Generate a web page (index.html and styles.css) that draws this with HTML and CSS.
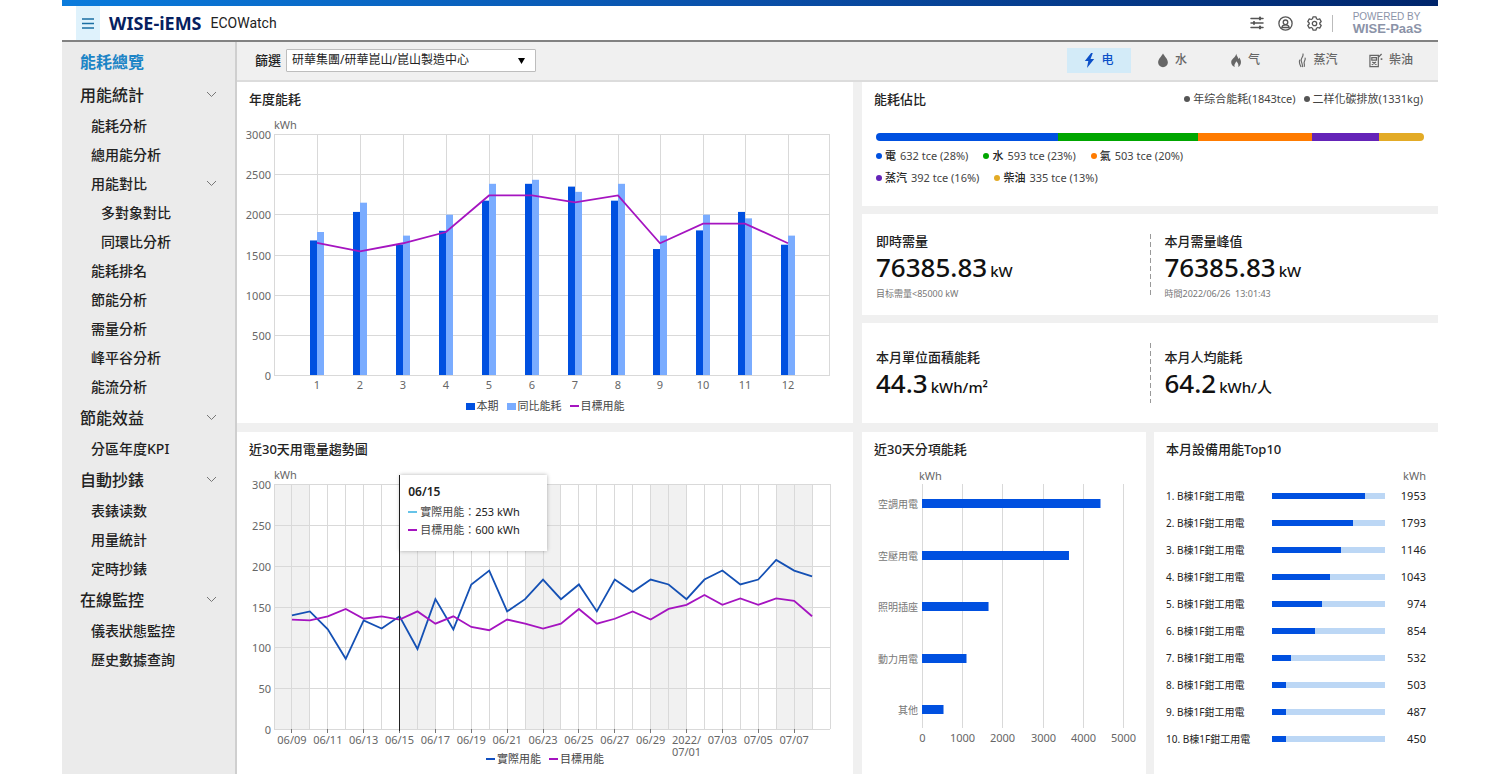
FILE: index.html
```html
<!DOCTYPE html>
<html lang="zh-Hant">
<head>
<meta charset="utf-8">
<meta name="viewport" content="width=device-width, initial-scale=1">
<title>WISE-iEMS ECOWatch</title>
<link rel="stylesheet" href="styles.css">
</head>
<body>
<div class="shell">
  <header class="header">
    <button class="menu-button" type="button" aria-label="選單">
      <svg width="12" height="11" viewBox="0 0 12 11" fill="none" stroke="currentColor" stroke-width="1.5"><path d="M0 1h12M0 5.5h12M0 10h12"/></svg>
    </button>
    <span class="brand">WISE-iEMS</span>
    <span class="product">ECOWatch</span>
    <div class="header-tools">
      <button class="icon-button" type="button" aria-label="偏好">
        <svg width="14" height="14" viewBox="0 0 14 14" fill="none" stroke="currentColor" stroke-width="1.5" stroke-linecap="round"><path d="M1 2.500h12M1 7h12M1 11.500h12"/><path d="M10 1.700v1.600M4 6.200v1.600M10 10.700v1.600" stroke-width="2.200"/></svg>
      </button>
      <button class="icon-button" type="button" aria-label="使用者">
        <svg width="15" height="15" viewBox="0 0 15 15" fill="none" stroke="currentColor" stroke-width="1.3"><circle cx="7.500" cy="7.500" r="6.600"/><circle cx="7.500" cy="6.300" r="2.300"/><path d="M3.800 11.500c.3-1.700 1.600-2.700 3.700-2.700s3.400 1 3.700 2.700z"/></svg>
      </button>
      <button class="icon-button" type="button" aria-label="設定">
        <svg width="15" height="15" viewBox="0 0 15 15" fill="none" stroke="currentColor" stroke-width="1.3" stroke-linejoin="round"><path d="M6 .9h3l.5 1.900 1.300.7 1.900-.6 1.500 2.600L12.800 7v1l1.400 1.500-1.500 2.600-1.900-.6-1.300.7L9 14.100H6l-.5-1.900-1.300-.7-1.900.6L.8 9.500 2.200 8V7L.8 5.500l1.500-2.600 1.900.6 1.300-.7z"/><circle cx="7.500" cy="7.500" r="2.200"/></svg>
      </button>
      <span class="tool-divider"></span>
      <div class="powered"><span>POWERED BY</span><strong>WISE-PaaS</strong></div>
    </div>
  </header>

  <div class="body">
    <nav class="sidebar" aria-label="主選單">
      <a class="nav-top nav-active" href="#">能耗總覽</a>
      <button class="nav-top" type="button">用能統計<svg class="chevron" viewBox="0 0 11 7"><path d="M1 1l4.500 4.500L10 1"/></svg></button>
      <a class="nav-item" href="#">能耗分析</a>
      <a class="nav-item" href="#">總用能分析</a>
      <button class="nav-item" type="button">用能對比<svg class="chevron" viewBox="0 0 11 7"><path d="M1 1l4.500 4.500L10 1"/></svg></button>
      <a class="nav-item nav-sub" href="#">多對象對比</a>
      <a class="nav-item nav-sub" href="#">同環比分析</a>
      <a class="nav-item" href="#">能耗排名</a>
      <a class="nav-item" href="#">節能分析</a>
      <a class="nav-item" href="#">需量分析</a>
      <a class="nav-item" href="#">峰平谷分析</a>
      <a class="nav-item" href="#">能流分析</a>
      <button class="nav-top" type="button">節能效益<svg class="chevron" viewBox="0 0 11 7"><path d="M1 1l4.500 4.500L10 1"/></svg></button>
      <a class="nav-item" href="#">分區年度KPI</a>
      <button class="nav-top" type="button">自動抄錶<svg class="chevron" viewBox="0 0 11 7"><path d="M1 1l4.500 4.500L10 1"/></svg></button>
      <a class="nav-item" href="#">表錶读数</a>
      <a class="nav-item" href="#">用量統計</a>
      <a class="nav-item" href="#">定時抄錶</a>
      <button class="nav-top" type="button">在線監控<svg class="chevron" viewBox="0 0 11 7"><path d="M1 1l4.500 4.500L10 1"/></svg></button>
      <a class="nav-item" href="#">儀表狀態監控</a>
      <a class="nav-item" href="#">歷史數據查詢</a>
    </nav>

    <main class="main">
      <div class="toolbar">
        <label class="filter-label" for="site">篩選</label>
        <div class="select-wrap">
          <select id="site" class="select"><option>研華集團/研華崑山/崑山製造中心</option></select>
          <svg class="select-arrow" viewBox="0 0 7 6"><path d="M0 0h7L3.500 6z"/></svg>
        </div>
        <div class="tabs">
          <button class="tab tab-active" type="button">
            <svg width="11" height="15" viewBox="0 0 11 16" fill="currentColor"><path d="M7.200 0L.5 8.600h3.700L2.800 16l7.700-9.600H6.600L9 0z"/></svg>电</button>
          <button class="tab" type="button">
            <svg width="12" height="15" viewBox="0 0 12 16" fill="currentColor"><path d="M6 .5c1.500 2.900 5.200 6 5.200 9.500A5.200 5.200 0 0 1 6 15.200 5.200 5.200 0 0 1 .8 10C.8 6.500 4.500 3.400 6 .5z"/></svg>水</button>
          <button class="tab" type="button">
            <svg width="12" height="15" viewBox="0 0 12 16" fill="currentColor"><path d="M6.300.8c.3 2.700 2 3.600 2.300 5.600.5-.4.7-1 .7-1.700 1.300 1.400 2 3.100 2 4.900 0 2.500-1.200 4.300-2.900 5.300.6-2.400-.3-4.300-2.200-6-.3 1.700-1.800 2.700-1.900 4.200 0 .7.200 1.300.6 1.800C2.300 14.100.9 12.300.9 9.900c0-3.600 4.200-4.600 5.400-9.100z"/></svg>气</button>
          <button class="tab" type="button">
            <svg width="9" height="15" viewBox="0 0 9 16" fill="none" stroke="currentColor" stroke-width="1.200" stroke-linecap="round"><path d="M5 1c.7 2.700-1.900 4-1.900 6.700 0 2.500 1.700 3.800 1.300 6.800M1.600 7.500C.4 9.700 1.200 11.500 2.700 14.500M7.300 5.500c.6 1.900-1.100 2.900-1.100 4.600 0 1.600.7 2.400.1 4.300"/></svg>蒸汽</button>
          <button class="tab" type="button">
            <svg width="14" height="15" viewBox="0 0 15 16" fill="none" stroke="currentColor" stroke-width="1.300"><path d="M1 2.500h9v12H1zM3 5h5v2.500H3zM3 12.500L7.500 9.500M3.500 9.500L8 12.500M10 4.500L13.500 1"/><path d="M12.500 6.500h1.800" stroke-width="1.800"/></svg>柴油</button>
        </div>
      </div>

      <div class="dashboard">
        <section class="card">
          <h2 class="card-title">年度能耗</h2>
          <svg class="chart" id="annual" viewBox="0 0 616 285" role="img" aria-label="年度能耗"></svg>
          <ul class="legend">
            <li><i class="swatch swatch-now"></i>本期</li>
            <li><i class="swatch swatch-prev"></i>同比能耗</li>
            <li><i class="dash dash-target"></i>目標用能</li>
          </ul>
        </section>

        <div class="side-column">
          <section class="card share-card">
            <div class="share-head">
              <h2 class="card-title">能耗佔比</h2>
              <ul class="totals">
                <li><i class="dot dot-grey"></i>年综合能耗(1843tce)</li>
                <li><i class="dot dot-grey"></i>二样化碳排放(1331kg)</li>
              </ul>
            </div>
            <div class="share-bar">
              <span class="power" style="flex-grow:182"></span>
              <span class="water" style="flex-grow:140"></span>
              <span class="gas" style="flex-grow:114"></span>
              <span class="steam" style="flex-grow:67"></span>
              <span class="diesel" style="flex-grow:45"></span>
            </div>
            <ul class="share-list">
              <li><i class="dot power"></i><b>電</b>632 tce (28%)</li>
              <li><i class="dot water"></i><b>水</b>593 tce (23%)</li>
              <li><i class="dot gas"></i><b>氣</b>503 tce (20%)</li>
            </ul>
            <ul class="share-list">
              <li><i class="dot steam"></i><b>蒸汽</b>392 tce (16%)</li>
              <li><i class="dot diesel"></i><b>柴油</b>335 tce (13%)</li>
            </ul>
          </section>
          <section class="card stats">
            <div class="stat"><h3>即時需量</h3><p class="value">76385.83<small>kW</small></p><p class="note">目标需量&lt;85000 kW</p></div>
            <span class="stat-divider"></span>
            <div class="stat"><h3>本月需量峰值</h3><p class="value">76385.83<small>kW</small></p><p class="note">時間2022/06/26&nbsp; 13:01:43</p></div>
          </section>
          <section class="card stats stats-short">
            <div class="stat"><h3>本月單位面積能耗</h3><p class="value">44.3<small>kWh/m²</small></p></div>
            <span class="stat-divider"></span>
            <div class="stat"><h3>本月人均能耗</h3><p class="value">64.2<small>kWh/人</small></p></div>
          </section>
        </div>

        <section class="card">
          <h2 class="card-title">近30天用電量趨勢圖</h2>
          <div class="chart-wrap">
            <svg class="chart" id="trend" viewBox="0 0 616 288" role="img" aria-label="近30天用電量趨勢圖"></svg>
            <div class="tooltip">
              <strong>06/15</strong>
              <span><i class="dash dash-sky"></i>實際用能：<em>253 kWh</em></span>
              <span><i class="dash dash-target"></i>目標用能：<em>600 kWh</em></span>
            </div>
          </div>
          <ul class="legend">
            <li><i class="dash dash-actual"></i>實際用能</li>
            <li><i class="dash dash-target"></i>目標用能</li>
          </ul>
        </section>

        <div class="pair">
          <section class="card">
            <h2 class="card-title">近30天分項能耗</h2>
            <svg class="chart" id="breakdown" viewBox="0 0 284 290" role="img" aria-label="近30天分項能耗"></svg>
          </section>
          <section class="card">
            <h2 class="card-title">本月設備用能Top10</h2>
            <table class="ranking">
              <thead><tr><th></th><th></th><th>kWh</th></tr></thead>
              <tbody>
                <tr><td>1. B棟1F鉗工用電</td><td><div class="meter"><span style="width:82%"></span></div></td><td>1953</td></tr>
                <tr><td>2. B棟1F鉗工用電</td><td><div class="meter"><span style="width:72%"></span></div></td><td>1793</td></tr>
                <tr><td>3. B棟1F鉗工用電</td><td><div class="meter"><span style="width:61%"></span></div></td><td>1146</td></tr>
                <tr><td>4. B棟1F鉗工用電</td><td><div class="meter"><span style="width:51%"></span></div></td><td>1043</td></tr>
                <tr><td>5. B棟1F鉗工用電</td><td><div class="meter"><span style="width:44%"></span></div></td><td>974</td></tr>
                <tr><td>6. B棟1F鉗工用電</td><td><div class="meter"><span style="width:38%"></span></div></td><td>854</td></tr>
                <tr><td>7. B棟1F鉗工用電</td><td><div class="meter"><span style="width:17%"></span></div></td><td>532</td></tr>
                <tr><td>8. B棟1F鉗工用電</td><td><div class="meter"><span style="width:12%"></span></div></td><td>503</td></tr>
                <tr><td>9. B棟1F鉗工用電</td><td><div class="meter"><span style="width:12%"></span></div></td><td>487</td></tr>
                <tr><td>10. B棟1F鉗工用電</td><td><div class="meter"><span style="width:12%"></span></div></td><td>450</td></tr>
              </tbody>
            </table>
          </section>
        </div>
      </div>
    </main>
  </div>
</div>
<script src="charts.js"></script>
</body>
</html>
```

FILE: styles.css
```css
* { box-sizing: border-box; }

body {
  margin: 0;
  background: #fff;
  color: #222;
  font-family: "Noto Sans", "Noto Sans CJK TC", sans-serif;
  font-size: 11px;
  line-height: 18px;
}

h2, h3, p, ul { margin: 0; padding: 0; }
ul { list-style: none; }
button { border: 0; background: none; padding: 0; font: inherit; color: inherit; cursor: pointer; }
a { color: inherit; text-decoration: none; }
svg { flex: none; }

.shell {
  display: flex;
  flex-direction: column;
  min-height: 100vh;
  margin: 0 62px;
}

/* Header */
.header {
  display: flex;
  align-items: center;
  height: 42px;
  padding: 6px 16px 0 14px;
  background: linear-gradient(90deg, #0a7bdc, #0a4fa8 50%, #00256b) top / 100% 6px no-repeat;
  border-bottom: 2px solid #828282;
}
.menu-button {
  display: grid;
  place-items: center;
  align-self: stretch;
  width: 24px;
  background: #dff2fc;
  color: #1b6fa3;
}
.brand {
  margin-left: 9px;
  color: #06205f;
  font-size: 18px;
  font-weight: 700;
}
.product {
  margin-left: 9px;
  font-family: Roboto, sans-serif;
  font-size: 14px;
}
.header-tools {
  display: flex;
  align-items: center;
  gap: 14px;
  margin-left: auto;
  color: #555;
}
.icon-button { display: grid; place-items: center; }
.tool-divider { width: 1px; height: 17px; margin-left: -4px; background: #bbb; }
.powered {
  display: flex;
  flex-direction: column;
  margin-left: 6px;
  color: #8b93a8;
  font-family: "Liberation Sans", sans-serif;
  font-size: 10px;
  line-height: 12px;
}
.powered strong { font-size: 13px; }

/* Sidebar */
.body { display: flex; flex: 1; }
.sidebar {
  display: flex;
  flex-direction: column;
  flex: none;
  width: 175px;
  padding-top: 3px;
  background: #ebebeb;
  border-right: 2px solid #cfcfcf;
}
.nav-top, .nav-item {
  display: flex;
  align-items: center;
  justify-content: space-between;
  padding: 0 18px;
  text-align: left;
  font-weight: 500;
}
.nav-top { height: 33px; font-size: 16px; }
.nav-item { height: 29px; padding-left: 29px; font-size: 14px; }
.nav-sub { padding-left: 39px; }
.nav-active { color: #1c84c6; font-weight: 700; }
.chevron { width: 11px; height: 7px; fill: none; stroke: #777; }

/* Toolbar */
.main { display: flex; flex-direction: column; flex: 1; min-width: 0; background: #f0f0f0; }
.toolbar {
  display: flex;
  align-items: center;
  height: 40px;
  padding: 0 15px 2px 18px;
  border-bottom: 2px solid #dcdcdc;
}
.filter-label { font-size: 13px; font-weight: 500; margin-right: 5px; }
.select-wrap { position: relative; width: 250px; }
.select {
  display: block;
  width: 100%;
  height: 23px;
  padding: 0 24px 0 5px;
  appearance: none;
  border: 1px solid #bdbdbd;
  border-radius: 1px;
  background: #fff;
  color: #222;
  font: inherit;
  font-size: 12px;
}
.select-arrow {
  position: absolute;
  top: 9px;
  right: 11px;
  width: 7px;
  height: 6px;
  pointer-events: none;
}
.tabs { display: flex; gap: 9px; margin-left: auto; }
.tab {
  display: flex;
  align-items: center;
  justify-content: center;
  gap: 6px;
  width: 64px;
  height: 25px;
  color: #666;
  font-size: 12px;
  font-weight: 500;
}
.tab-active { background: #d3ebf8; color: #0b50c8; }

/* Dashboard */
.dashboard {
  display: grid;
  grid-template-columns: 616fr 576fr;
  grid-template-rows: auto 1fr;
  gap: 9px;
  flex: 1;
}
.card { min-width: 0; padding-top: 8px; background: #fff; }
.card-title { padding: 0 12px; color: #222; font-size: 13px; font-weight: 500; line-height: 18px; }
.chart { display: block; width: 100%; margin-top: 4px; overflow: visible; }
.chart text { font-size: 11px; fill: #666; }
.chart .category { font-size: 10px; fill: #777; }
.chart-wrap { position: relative; }

.legend {
  display: flex;
  justify-content: center;
  gap: 8px;
  padding-bottom: 8px;
  color: #444;
}
.legend li { display: flex; align-items: center; gap: 2px; }
.swatch { width: 9px; height: 7px; }
.swatch-now { background: #0050e0; }
.swatch-prev { background: #7aacff; }
.dash { flex: none; width: 9px; height: 2px; }
.dash-target { background: #a514c0; }
.dash-actual { background: #124fc0; }
.dash-sky { background: #66c3e8; }

.tooltip {
  position: absolute;
  top: 13px;
  left: 26.5%;
  display: flex;
  flex-direction: column;
  width: 147px;
  height: 76px;
  padding: 8px;
  background: #fff;
  box-shadow: 0 0 4px #0000004d;
  color: #444;
}
.tooltip strong { margin-bottom: 2px; color: #222; font-size: 12px; font-weight: 600; }
.tooltip span { display: flex; align-items: center; gap: 3px; }
.tooltip em { margin-left: -3px; color: #222; font-style: normal; }

/* Right column */
.side-column {
  display: grid;
  grid-template-rows: 124fr 101fr 100fr;
  gap: 8px;
}
.share-head { display: flex; justify-content: space-between; }
.totals { display: flex; gap: 8px; padding-right: 15px; color: #444; }
.totals li, .share-list li { display: flex; align-items: center; gap: 3px; }
.dot { width: 6px; height: 6px; border-radius: 50%; }
.dot-grey { background: #555; }
.power { background: #0050e0; }
.water { background: #00a600; }
.gas { background: #ff7b00; }
.steam { background: #6423b8; }
.diesel { background: #e3ab26; }
.share-bar {
  display: flex;
  height: 8px;
  margin: 25px 14px 6px;
  overflow: hidden;
  border-radius: 4px;
}
.share-list { display: flex; gap: 15px; margin: 0 14px 4px; color: #444; }
.share-list b { margin-right: 1px; color: #222; font-weight: 500; }

.stats { display: flex; align-items: center; padding: 2px 0 0; }
.stats-short { padding-top: 6px; }
.stat { flex: 1; padding-left: 14px; }
.stat h3 { font-size: 13px; font-weight: 500; }
.stat .value { color: #111; font-size: 26px; font-weight: 500; line-height: 34px; }
.stat small { margin-left: 3px; font-size: 15px; }
.stat .note { color: #777; font-size: 9px; line-height: 12px; }
.stat-divider {
  align-self: stretch;
  width: 1px;
  margin: 18px 0 20px;
  background: repeating-linear-gradient(#999 0 5px, transparent 5px 8px);
}
.stats-short .stat-divider { margin-top: 14px; }

.pair { display: grid; grid-template-columns: 1fr 1fr; gap: 8px; }

.ranking { width: 100%; border-collapse: collapse; table-layout: fixed; }
.ranking th, .ranking td { padding: 0; height: 27px; line-height: 18px; text-align: left; font-weight: 400; }
.ranking th { height: 24px; padding-top: 12px; line-height: 12px; color: #666; }
.ranking th:first-child, .ranking td:first-child { width: 118px; padding-left: 12px; font-size: 10px; white-space: nowrap; }
.ranking th:last-child, .ranking td:last-child { width: 53px; padding-right: 12px; text-align: right; }
.meter { height: 6px; background: #bcd7f5; }
.meter span { display: block; height: 100%; background: #0050e0; }
```

FILE: charts.js
```js
const NS = 'http://www.w3.org/2000/svg';

function add(svg, tag, attrs, text) {
  const node = document.createElementNS(NS, tag);
  for (const key in attrs) node.setAttribute(key, attrs[key]);
  if (text !== undefined) node.textContent = text;
  svg.appendChild(node);
}

function line(svg, x1, y1, x2, y2, stroke = '#d9d9d9') {
  add(svg, 'line', { x1, y1, x2, y2, stroke });
}

function label(svg, x, y, text, anchor = 'middle', cls = 'tick') {
  add(svg, 'text', { x, y, 'text-anchor': anchor, class: cls }, text);
}

function yAxis(svg, top, bottom, left, right, max, step) {
  for (let v = 0; v <= max; v += step) {
    const y = Math.round(bottom - (v / max) * (bottom - top)) + 0.5;
    line(svg, left, y, right, y);
    label(svg, left - 3, y + 4, v, 'end');
  }
  label(svg, left, top - 5, 'kWh', 'start');
}

function polyline(svg, points, stroke) {
  add(svg, 'polyline', { points: points.map(p => p.join(',')).join(' '), fill: 'none', stroke, 'stroke-width': 1.8 });
}

function drawAnnual() {
  const svg = document.getElementById('annual');
  const top = 22, bottom = 263, left = 37, right = 593;
  const now = [1675, 2030, 1625, 1795, 2170, 2380, 2345, 2170, 1568, 1800, 2030, 1622];
  const prev = [1780, 2145, 1735, 1995, 2380, 2430, 2280, 2380, 1735, 1995, 1950, 1735];
  const target = [1645, 1540, 1640, 1780, 2235, 2235, 2150, 2235, 1640, 1885, 1885, 1640];
  const y = v => bottom - (v / 3000) * (bottom - top);
  const x = i => 80 + Math.round(i < 8 ? i * 43 : 301 + (i - 7) * 42.4);
  yAxis(svg, top, bottom, left, right, 3000, 500);
  line(svg, left + 0.5, top, left + 0.5, bottom);
  line(svg, right - 0.5, top, right - 0.5, bottom);
  now.forEach((v, i) => {
    line(svg, x(i) + 0.5, top, x(i) + 0.5, bottom);
    add(svg, 'rect', { x: x(i) - 7, y: y(v), width: 7, height: bottom - y(v), fill: '#0050e0' });
    add(svg, 'rect', { x: x(i), y: y(prev[i]), width: 7, height: bottom - y(prev[i]), fill: '#7aacff' });
    label(svg, x(i), bottom + 14, i + 1);
  });
  polyline(svg, target.map((v, i) => [x(i), y(v)]), '#a514c0');
}

function drawTrend() {
  const svg = document.getElementById('trend');
  const top = 22, bottom = 267, left = 37, right = 593;
  const actual = [139, 144, 122, 86, 133, 123, 138, 98, 159, 122, 177, 194, 144, 159, 183, 159, 177, 144, 183, 168, 183, 177, 159, 183, 194, 177, 183, 207, 194, 187];
  const target = [134, 133, 138, 147, 135, 138, 134, 144, 129, 138, 125, 121, 134, 129, 123, 129, 147, 129, 135, 144, 134, 147, 152, 164, 152, 160, 152, 160, 157, 138];
  const dates = ['06/09', '06/11', '06/13', '06/15', '06/17', '06/19', '06/21', '06/23', '06/25', '06/27', '06/29', '2022/', '07/03', '07/05', '07/07'];
  const y = v => bottom - (v / 300) * (bottom - top);
  const x = i => left + i * (right - left) / 31;
  for (let i = 0; i < 31; i += 7) {
    add(svg, 'rect', { x: x(i), y: top, width: x(2) - x(0), height: bottom - top, fill: '#f1f1f1' });
  }
  for (let i = 0; i <= 31; i++) {
    const gx = Math.floor(x(i)) + 0.5;
    line(svg, gx, top, gx, bottom);
  }
  yAxis(svg, top, bottom, left, right, 300, 50);
  dates.forEach((d, k) => {
    const gx = x(2 * k + 1);
    line(svg, Math.floor(gx) + 0.5, bottom, Math.floor(gx) + 0.5, bottom + 4, '#777');
    label(svg, gx, bottom + 15, d);
    if (d === '2022/') label(svg, gx, bottom + 27, '07/01');
  });
  polyline(svg, actual.map((v, i) => [x(i + 1), y(v)]), '#1450b4');
  polyline(svg, target.map((v, i) => [x(i + 1), y(v)]), '#a514c0');
  line(svg, 162.5, 13, 162.5, bottom + 2, '#222');
}

function drawBreakdown() {
  const svg = document.getElementById('breakdown');
  const rows = [['空調用電', 4440], ['空壓用電', 3656], ['照明插座', 1655], ['動力用電', 1107], ['其他', 535]];
  const left = 60, unit = 40.2;
  label(svg, left - 3, 18, 'kWh', 'start');
  for (let i = 0; i <= 5; i++) {
    const gx = Math.round(left + i * unit) + 0.5;
    line(svg, gx, 22, gx, 266);
    label(svg, gx, 280, i * 1000);
  }
  rows.forEach(([name, v], i) => {
    const cy = Math.round(41 + i * 51.6);
    add(svg, 'rect', { x: left, y: cy - 4, width: v / 1000 * unit, height: 9, fill: '#0050e0' });
    label(svg, left - 4, cy + 5, name, 'end', 'category');
  });
}

drawAnnual();
drawTrend();
drawBreakdown();
```
